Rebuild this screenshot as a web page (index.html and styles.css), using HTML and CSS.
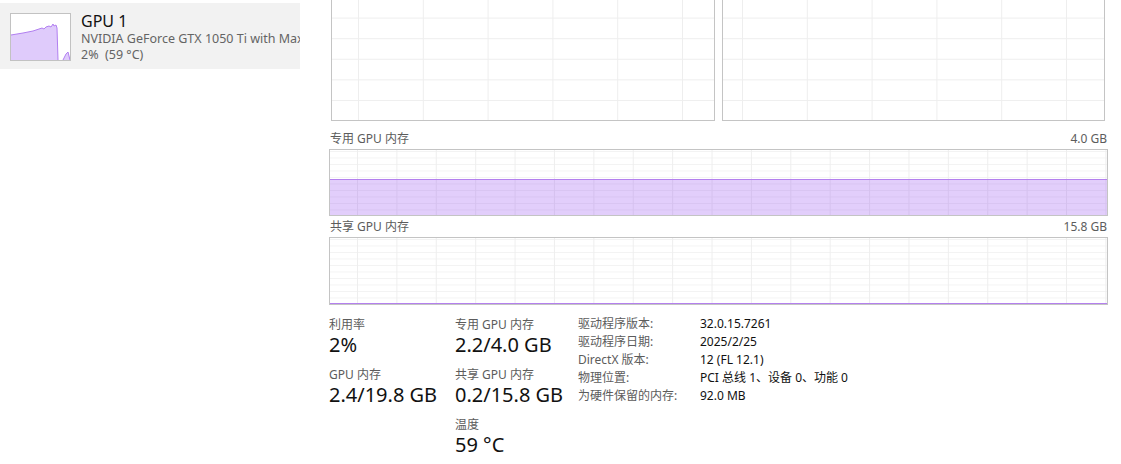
FILE: index.html
```html
<!DOCTYPE html>
<html lang="zh-CN">
<head>
<meta charset="utf-8">
<title>GPU 1</title>
<link rel="stylesheet" href="styles.css">
</head>
<body>
<div class="app">
  <aside class="sidebar">
    <div class="item">
      <div class="thumb">
        <svg width="59" height="46" viewBox="0 0 59 46">
          <path d="M0 21 L6 20 L12 19 L17 18 L22 17 L25 16 L28 15 L31 14 L33 15 L35 13 L38 12 L40 13 L42 10 L43 12 L45 11 L46 14 L47 46 L0 46 Z" fill="#dfcbfb" stroke="none"/>
          <path d="M0 21 L6 20 L12 19 L17 18 L22 17 L25 16 L28 15 L31 14 L33 15 L35 13 L38 12 L40 13 L42 10 L43 12 L45 11 L46 14 L47 46" fill="none" stroke="#b17ff0" stroke-width="1"/>
          <path d="M52 46 L55 40 L57 38 L59 46 Z" fill="#dfcbfb"/>
          <path d="M52 46 L55 40 L57 38 L59 46" fill="none" stroke="#b17ff0" stroke-width="1"/>
        </svg>
      </div>
      <div class="info">
        <div class="title">GPU 1</div>
        <div class="sub">NVIDIA GeForce GTX 1050 Ti with Max-Q Design</div>
        <div class="sub">2%  (59 °C)</div>
      </div>
    </div>
  </aside>
  <main class="main">
    <div class="top-charts">
      <div class="chart top left"></div>
      <div class="chart top right"></div>
    </div>
    <div class="chart-label first"><span>专用 GPU 内存</span><span>4.0 GB</span></div>
    <div class="chart mem">
      <div class="fill" style="height:36px"></div>
    </div>
    <div class="chart-label second"><span>共享 GPU 内存</span><span>15.8 GB</span></div>
    <div class="chart mem shared">
      <div class="fill" style="height:0px"></div>
    </div>
    <div class="stats">
      <div class="col col1">
        <div class="stat">
          <div class="stat-label">利用率</div>
          <div class="stat-value">2%</div>
        </div>
        <div class="stat">
          <div class="stat-label">GPU 内存</div>
          <div class="stat-value">2.4/19.8 GB</div>
        </div>
      </div>
      <div class="col col2">
        <div class="stat">
          <div class="stat-label">专用 GPU 内存</div>
          <div class="stat-value">2.2/4.0 GB</div>
        </div>
        <div class="stat">
          <div class="stat-label">共享 GPU 内存</div>
          <div class="stat-value">0.2/15.8 GB</div>
        </div>
        <div class="stat">
          <div class="stat-label">温度</div>
          <div class="stat-value">59 °C</div>
        </div>
      </div>
      <div class="details">
        <div class="d-label">驱动程序版本:</div><div class="d-value">32.0.15.7261</div>
        <div class="d-label">驱动程序日期:</div><div class="d-value">2025/2/25</div>
        <div class="d-label">DirectX 版本:</div><div class="d-value">12 (FL 12.1)</div>
        <div class="d-label">物理位置:</div><div class="d-value">PCI 总线 1、设备 0、功能 0</div>
        <div class="d-label">为硬件保留的内存:</div><div class="d-value">92.0 MB</div>
      </div>
    </div>
  </main>
</div>
</body>
</html>
```
FILE: styles.css
```css
* { box-sizing: border-box; }
html, body {
  margin: 0;
  padding: 0;
  background: #ffffff;
}
body {
  font-family: "Noto Sans", "Noto Sans CJK SC", sans-serif;
  color: #1b1b1b;
  width: 1121px;
  height: 464px;
  overflow: hidden;
}
.app {
  display: flex;
  align-items: flex-start;
}

/* Sidebar */
.sidebar {
  width: 300px;
  flex: none;
  padding-top: 3px;
}
.item {
  display: flex;
  align-items: flex-start;
  gap: 10px;
  height: 66px;
  padding: 10px 0 0 10px;
  background: #f2f2f2;
  overflow: hidden;
}
.thumb {
  flex: none;
  width: 61px;
  height: 48px;
  border: 1px solid #c2c2c2;
  background: #ffffff;
  display: flex;
}
.thumb svg { display: block; }
.info {
  min-width: 0;
  flex: 1;
  overflow: hidden;
  margin-top: -2px;
}
.title {
  font-size: 16px;
  line-height: 20px;
  color: #111111;
  white-space: nowrap;
}
.sub {
  font-size: 12.5px;
  line-height: 16px;
  color: #646464;
  white-space: pre;
}

/* Main */
.main {
  width: 808px;
  padding-left: 29px;
  flex: none;
}
.top-charts {
  display: flex;
  gap: 7px;
  margin-left: 2px;
  width: 774px;
}
.chart {
  position: relative;
  background-color: #ffffff;
}
.chart.top {
  height: 121px;
  border: 1px solid #c4c4c4;
  border-top: none;
  background-image:
    linear-gradient(to right, #eeeeee 1px, transparent 1px),
    linear-gradient(to bottom, #eeeeee 1px, transparent 1px);
  background-size: 64.8px 100%, 100% 20.6px;
}
.chart.top.left {
  width: 384px;
  background-position: 26px 0, 0 17.6px;
}
.chart.top.right {
  width: 383px;
  background-position: 19px 0, 0 17.6px;
}

.chart-label {
  display: flex;
  justify-content: space-between;
  width: 778px;
  padding-left: 1px;
  font-size: 12px;
  line-height: 16px;
  color: #5c5c5c;
}
.chart-label.first {
  height: 28px;
  padding-top: 10px;
}
.chart-label.second {
  height: 21px;
  padding-top: 3px;
}

.chart.mem {
  width: 779px;
  height: 67px;
  border: 1px solid #c4c4c4;
  background-image:
    linear-gradient(to right, #eeeeee 1px, transparent 1px),
    linear-gradient(to bottom, #f3f3f3 1px, transparent 1px);
  background-size: 39.4px 100%, 100% 6.5px;
  background-position: 27px 0, 0 1px;
}
.chart.mem.shared {
  height: 68px;
}
.fill {
  position: absolute;
  left: 0;
  right: 0;
  bottom: 0;
  background: rgba(150, 80, 240, 0.28);
  border-top: 1px solid #b480ee;
}

/* Stats */
.stats {
  display: grid;
  grid-template-columns: 126px 123px auto;
  align-items: start;
  padding-top: 10px;
}
.col {
  display: flex;
  flex-direction: column;
  gap: 10px;
  padding-top: 2px;
}
.stat-label {
  font-size: 12px;
  line-height: 16px;
  color: #5c5c5c;
}
.stat-value {
  font-size: 20px;
  line-height: 24px;
  color: #111111;
  white-space: nowrap;
}
.details {
  display: grid;
  grid-template-columns: 122px auto;
  font-size: 12px;
  line-height: 18px;
}
.d-label {
  color: #5c5c5c;
  white-space: nowrap;
}
.d-value {
  color: #111111;
  white-space: nowrap;
}
```
